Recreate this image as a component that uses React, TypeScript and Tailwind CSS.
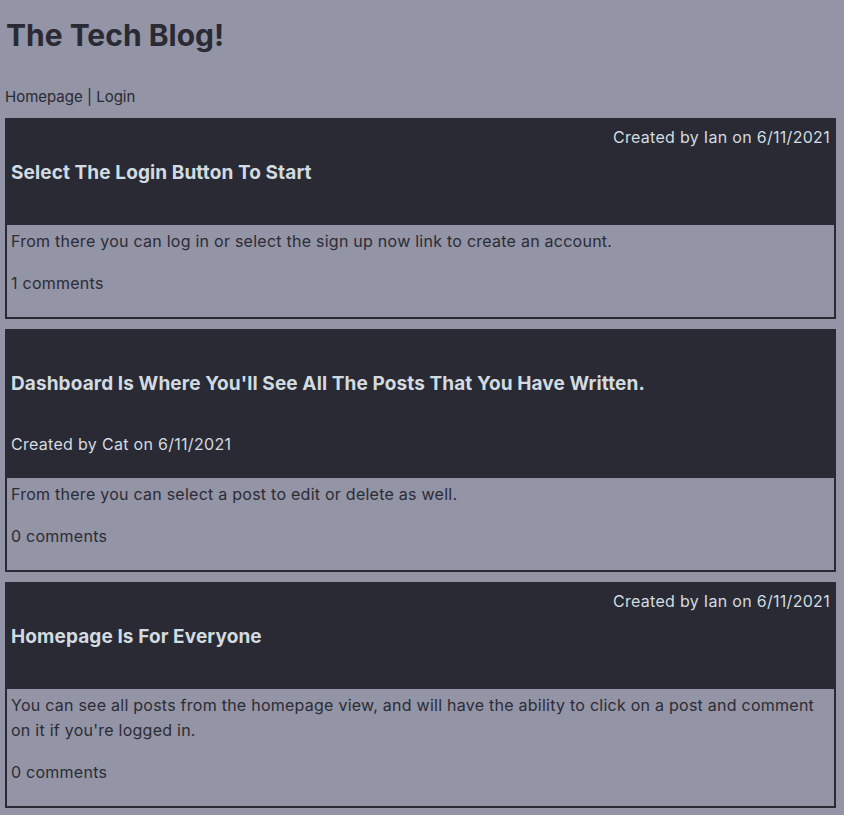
const posts = [
  {
    title: "Select The Login Button To Start",
    author: "Ian",
    date: "6/11/2021",
    body: "From there you can log in or select the sign up now link to create an account.",
    comments: 1,
    dateTop: true,
  },
  {
    title: "Dashboard Is Where You'll See All The Posts That You Have Written.",
    author: "Cat",
    date: "6/11/2021",
    body: "From there you can select a post to edit or delete as well.",
    comments: 0,
    dateTop: false,
  },
  {
    title: "Homepage Is For Everyone",
    author: "Ian",
    date: "6/11/2021",
    body: "You can see all posts from the homepage view, and will have the ability to click on a post and comment on it if you're logged in.",
    comments: 0,
    dateTop: true,
  },
];

type Post = (typeof posts)[number];

const PostCard = ({ post }: { post: Post }) => {
  return (
    <div className="w-[831px] ml-[5px] border-2 border-[#292a33]">
      <div className="bg-[#292a33] text-[#d2dbe0] px-[4px] pt-[5px] tracking-[0.3px]">
        {post.dateTop ? (
          <p className="text-right text-[16px] leading-[24px] h-[24px]">
            Created by {post.author} on {post.date}
          </p>
        ) : (
          <div className="h-[24px]" />
        )}
        <h2 className="mt-[12px] text-[19px] leading-[24px] font-bold tracking-[0.1px]">{post.title}</h2>
        {post.dateTop ? (
          <div className="h-[40px]" />
        ) : (
          <>
            <p className="mt-[36px] text-[16px] leading-[24px]">
              Created by {post.author} on {post.date}
            </p>
            <div className="h-[22px]" />
          </>
        )}
      </div>
      <div className="px-[4px] pt-[4px] pb-[21px] text-[16px] leading-[25px] text-[#2b2c36] tracking-[0.25px]">
        <p>{post.body}</p>
        <p className="mt-[17px]">{post.comments} comments</p>
      </div>
    </div>
  )
}

export default function App() {
  return (
    <div className="min-h-[815px] w-full bg-[#9394a5] font-['Inter',sans-serif] pb-[6px]">
      <h1 className="pl-[6px] pt-[17px] text-[30px] leading-[36px] font-bold text-[#292a33]">The Tech Blog!</h1>
      <nav className="pl-[5px] mt-[32px] text-[15px] leading-[24px] text-[#292a33]">
        Homepage | Login
      </nav>
      <div className="mt-[9px] flex flex-col gap-[10px]">
        {posts.map((p) => (
          <PostCard key={p.title} post={p} />
        ))}
      </div>
    </div>
  )
}
